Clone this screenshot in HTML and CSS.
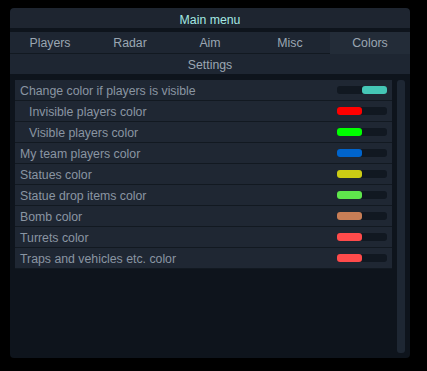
FILE: index.html
```html
<!DOCTYPE html>
<html>
<head>
<meta charset="utf-8">
<link rel="stylesheet" href="styles.css">
</head>
<body>
<div class="window">
  <div class="titlebar">Main menu</div>
  <div class="tabs">
    <div class="tab">Players</div>
    <div class="tab">Radar</div>
    <div class="tab">Aim</div>
    <div class="tab">Misc</div>
    <div class="tab active">Colors</div>
  </div>
  <div class="subtitle">Settings</div>
  <div class="content">
    <div class="rows">
      <div class="row"><span class="label">Change color if players is visible</span><span class="toggle on"><span class="knob teal"></span></span></div>
      <div class="row indent"><span class="label">Invisible players color</span><span class="toggle"><span class="knob red"></span></span></div>
      <div class="row indent"><span class="label">Visible players color</span><span class="toggle"><span class="knob green"></span></span></div>
      <div class="row"><span class="label">My team players color</span><span class="toggle"><span class="knob blue"></span></span></div>
      <div class="row"><span class="label">Statues color</span><span class="toggle"><span class="knob yellow"></span></span></div>
      <div class="row"><span class="label">Statue drop items color</span><span class="toggle"><span class="knob lime"></span></span></div>
      <div class="row"><span class="label">Bomb color</span><span class="toggle"><span class="knob brown"></span></span></div>
      <div class="row"><span class="label">Turrets color</span><span class="toggle"><span class="knob salmon"></span></span></div>
      <div class="row"><span class="label">Traps and vehicles etc. color</span><span class="toggle"><span class="knob salmon"></span></span></div>
    </div>
    <div class="scrollbar"></div>
  </div>
</div>
</body>
</html>
```
FILE: styles.css
```css
html, body {
  margin: 0;
  padding: 0;
  background: #000;
}
body {
  padding: 8px 0 0 10px;
  font-family: "Liberation Sans", Arial, sans-serif;
  font-size: 12.3px;
}
.window {
  width: 400px;
  height: 350px;
  background: #0e141c;
  border-radius: 4px;
  overflow: hidden;
  display: flex;
  flex-direction: column;
}
.titlebar {
  height: 20px;
  line-height: 20px;
  padding-top: 2px;
  box-sizing: border-box;
  background: #1e2530;
  color: #a4e8e2;
  text-align: center;
  border-radius: 4px 4px 0 0;
}
.tabs {
  margin-top: 4px;
  height: 21px;
  display: grid;
  grid-template-columns: repeat(5, 1fr);
  background: #1e2632;
  border-bottom: 1px solid #121921;
}
.tab {
  line-height: 21px;
  padding-top: 1px;
  text-align: center;
  color: #9ba6b2;
}
.tab.active {
  background: #232c38;
}
.subtitle {
  height: 20px;
  line-height: 20px;
  padding-top: 1px;
  box-sizing: border-box;
  background: #1e2632;
  color: #9ba6b2;
  text-align: center;
}
.content {
  margin-top: 6px;
  padding-left: 5px;
  display: flex;
  gap: 5px;
}
.rows {
  width: 377px;
  display: flex;
  flex-direction: column;
}
.row {
  height: 20px;
  border-bottom: 1px solid #121921;
  background: #1f2733;
  display: flex;
  align-items: center;
  justify-content: space-between;
  padding: 0 5px 0 5px;
}
.row.indent {
  padding-left: 14px;
}
.label {
  color: #8a95a2;
  margin-top: 2px;
}
.toggle {
  width: 50px;
  height: 8px;
  border-radius: 3px;
  background: #111821;
  display: flex;
}
.toggle.on {
  justify-content: flex-end;
}
.knob {
  width: 25px;
  height: 8px;
  border-radius: 3px;
}
.teal { background: #45c6b6; }
.red { background: #ff0000; }
.green { background: #00ff00; }
.blue { background: #0064cc; }
.yellow { background: #cccc14; }
.lime { background: #5fe64c; }
.brown { background: #c87e56; }
.salmon { background: #ff4b4b; }
.scrollbar {
  width: 8px;
  height: 273px;
  background: #1e2733;
  border-radius: 3px;
}
```
